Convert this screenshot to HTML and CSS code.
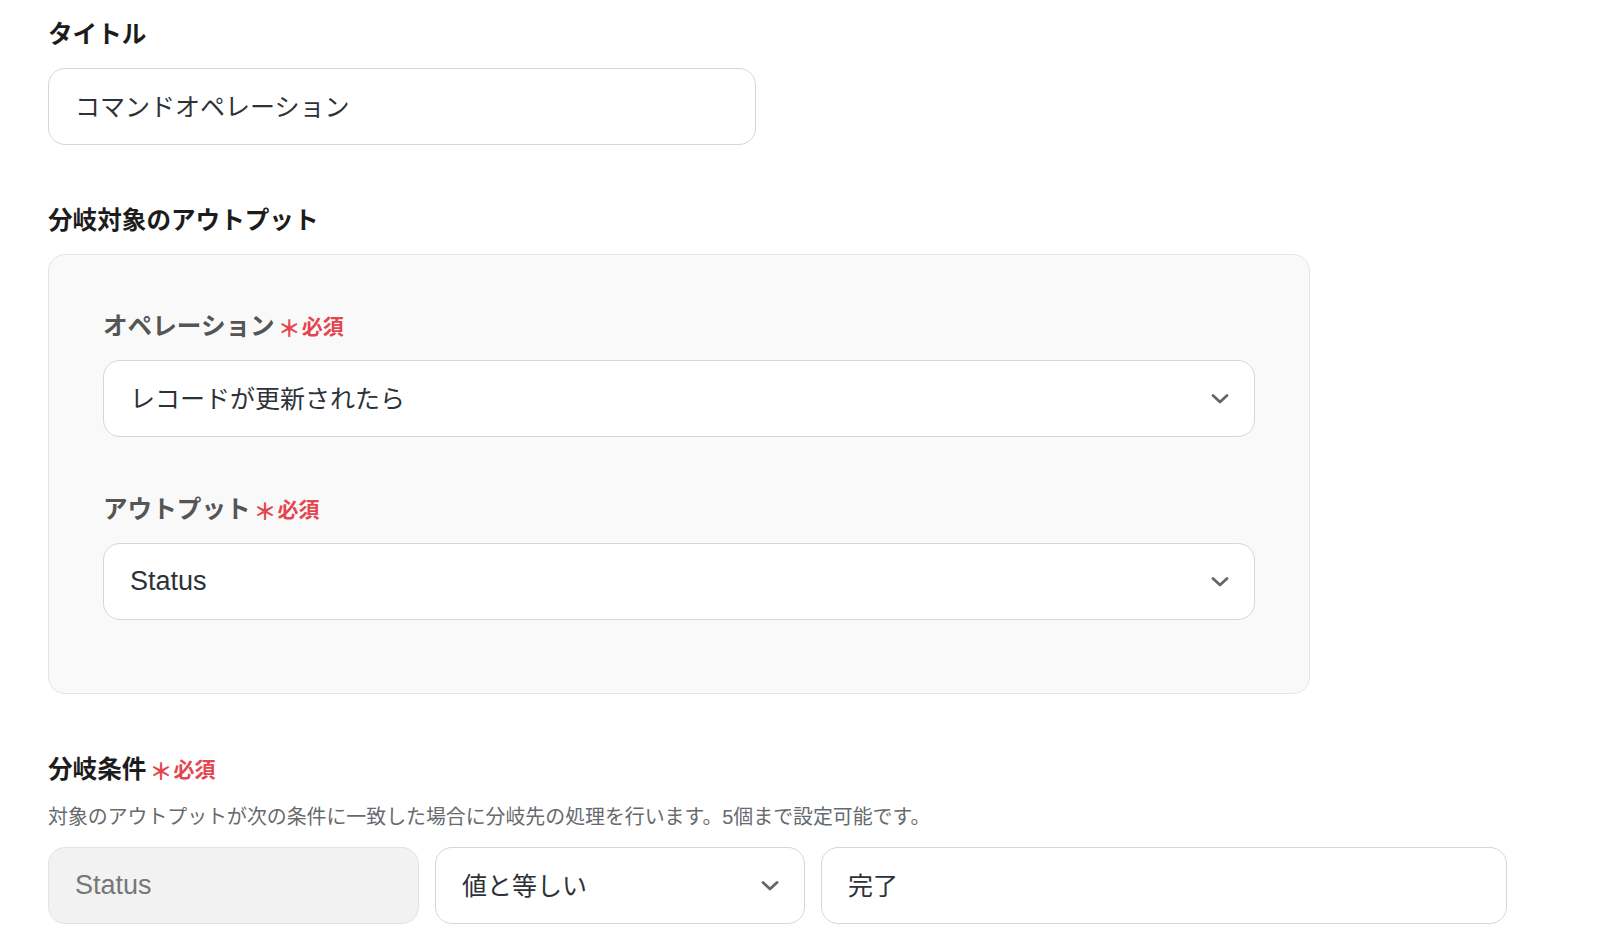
FILE: index.html
```html
<!DOCTYPE html>
<html lang="ja">
<head>
<meta charset="utf-8">
<title>分岐設定</title>
<link rel="stylesheet" href="styles.css">
</head>
<body>
<main class="page">
  <section class="field">
    <div class="label">タイトル</div>
    <div class="input title-input">コマンドオペレーション</div>
  </section>

  <section class="field field-gap">
    <div class="label">分岐対象のアウトプット</div>
    <div class="panel">
      <div class="sub-field">
        <div class="label label-muted">オペレーション<span class="star">＊</span><span class="req">必須</span></div>
        <div class="input select">
          <span>レコードが更新されたら</span>
          <svg class="chev" width="18" height="12" viewBox="0 0 18 12"><polyline points="2,2.5 9,9 16,2.5" fill="none" stroke="#666" stroke-width="2.8" stroke-linecap="round" stroke-linejoin="round"/></svg>
        </div>
      </div>
      <div class="sub-field sub-gap">
        <div class="label label-muted">アウトプット<span class="star">＊</span><span class="req">必須</span></div>
        <div class="input select">
          <span class="latin">Status</span>
          <svg class="chev" width="18" height="12" viewBox="0 0 18 12"><polyline points="2,2.5 9,9 16,2.5" fill="none" stroke="#666" stroke-width="2.8" stroke-linecap="round" stroke-linejoin="round"/></svg>
        </div>
      </div>
    </div>
  </section>

  <section class="field field-gap">
    <div class="label">分岐条件<span class="star">＊</span><span class="req">必須</span></div>
    <p class="help">対象のアウトプットが次の条件に一致した場合に分岐先の処理を行います。5個まで設定可能です。</p>
    <div class="cond-row">
      <div class="input disabled"><span class="latin">Status</span></div>
      <div class="input select">
        <span>値と等しい</span>
        <svg class="chev" width="18" height="12" viewBox="0 0 18 12"><polyline points="2,2.5 9,9 16,2.5" fill="none" stroke="#666" stroke-width="2.8" stroke-linecap="round" stroke-linejoin="round"/></svg>
      </div>
      <div class="input value">完了</div>
    </div>
  </section>
</main>
</body>
</html>
```

FILE: styles.css
```css
* { box-sizing: border-box; }

html, body {
  margin: 0;
  padding: 0;
  background: #ffffff;
}

body {
  font-family: "Liberation Sans", "Noto Sans CJK JP", sans-serif;
  color: #2b3036;
}

.page {
  padding: 19px 48px 0 48px;
  display: flex;
  flex-direction: column;
}

.field {
  display: flex;
  flex-direction: column;
}

.field-gap {
  margin-top: 60px;
}

.label {
  font-size: 24.6px;
  line-height: 32px;
  font-weight: 700;
  color: #1c1c1c;
  margin-bottom: 17px;
  display: flex;
  align-items: center;
}

.label-muted {
  color: #555555;
}

.star {
  color: #e4464f;
  font-size: 23px;
  font-weight: 700;
  margin-left: 3px;
  position: relative;
  top: 2px;
}

.req {
  color: #e4464f;
  font-size: 21px;
  font-weight: 700;
  margin-left: 1px;
}

.input {
  height: 77px;
  border: 1.5px solid #d3d7dd;
  border-radius: 17px;
  background: #ffffff;
  font-size: 25px;
  color: #2d3238;
  padding: 0 26px 4px 26px;
  display: flex;
  align-items: center;
}

.latin {
  font-size: 27px;
  margin-top: 4px;
}

.title-input {
  width: 708px;
}

.panel {
  width: 1262px;
  background: #f9f9f9;
  border: 1.5px solid #e4e4e4;
  border-radius: 17px;
  padding: 56px 54px 73px 54px;
  display: flex;
  flex-direction: column;
}

.sub-gap {
  margin-top: 57px;
}

.sub-field {
  display: flex;
  flex-direction: column;
}

.select {
  justify-content: space-between;
  padding-right: 25px;
}

.chev {
  flex: none;
  margin-top: 5px;
}

.help {
  margin: 0 0 16px 0;
  font-size: 19.9px;
  line-height: 28px;
  color: #666a6e;
}

.cond-row {
  display: flex;
  gap: 16px;
}

.disabled {
  width: 371px;
  background: #f2f2f2;
  border-color: #e3e3e3;
  color: #777777;
}

.cond-row .select {
  width: 370px;
}

.value {
  width: 686px;
}
```
